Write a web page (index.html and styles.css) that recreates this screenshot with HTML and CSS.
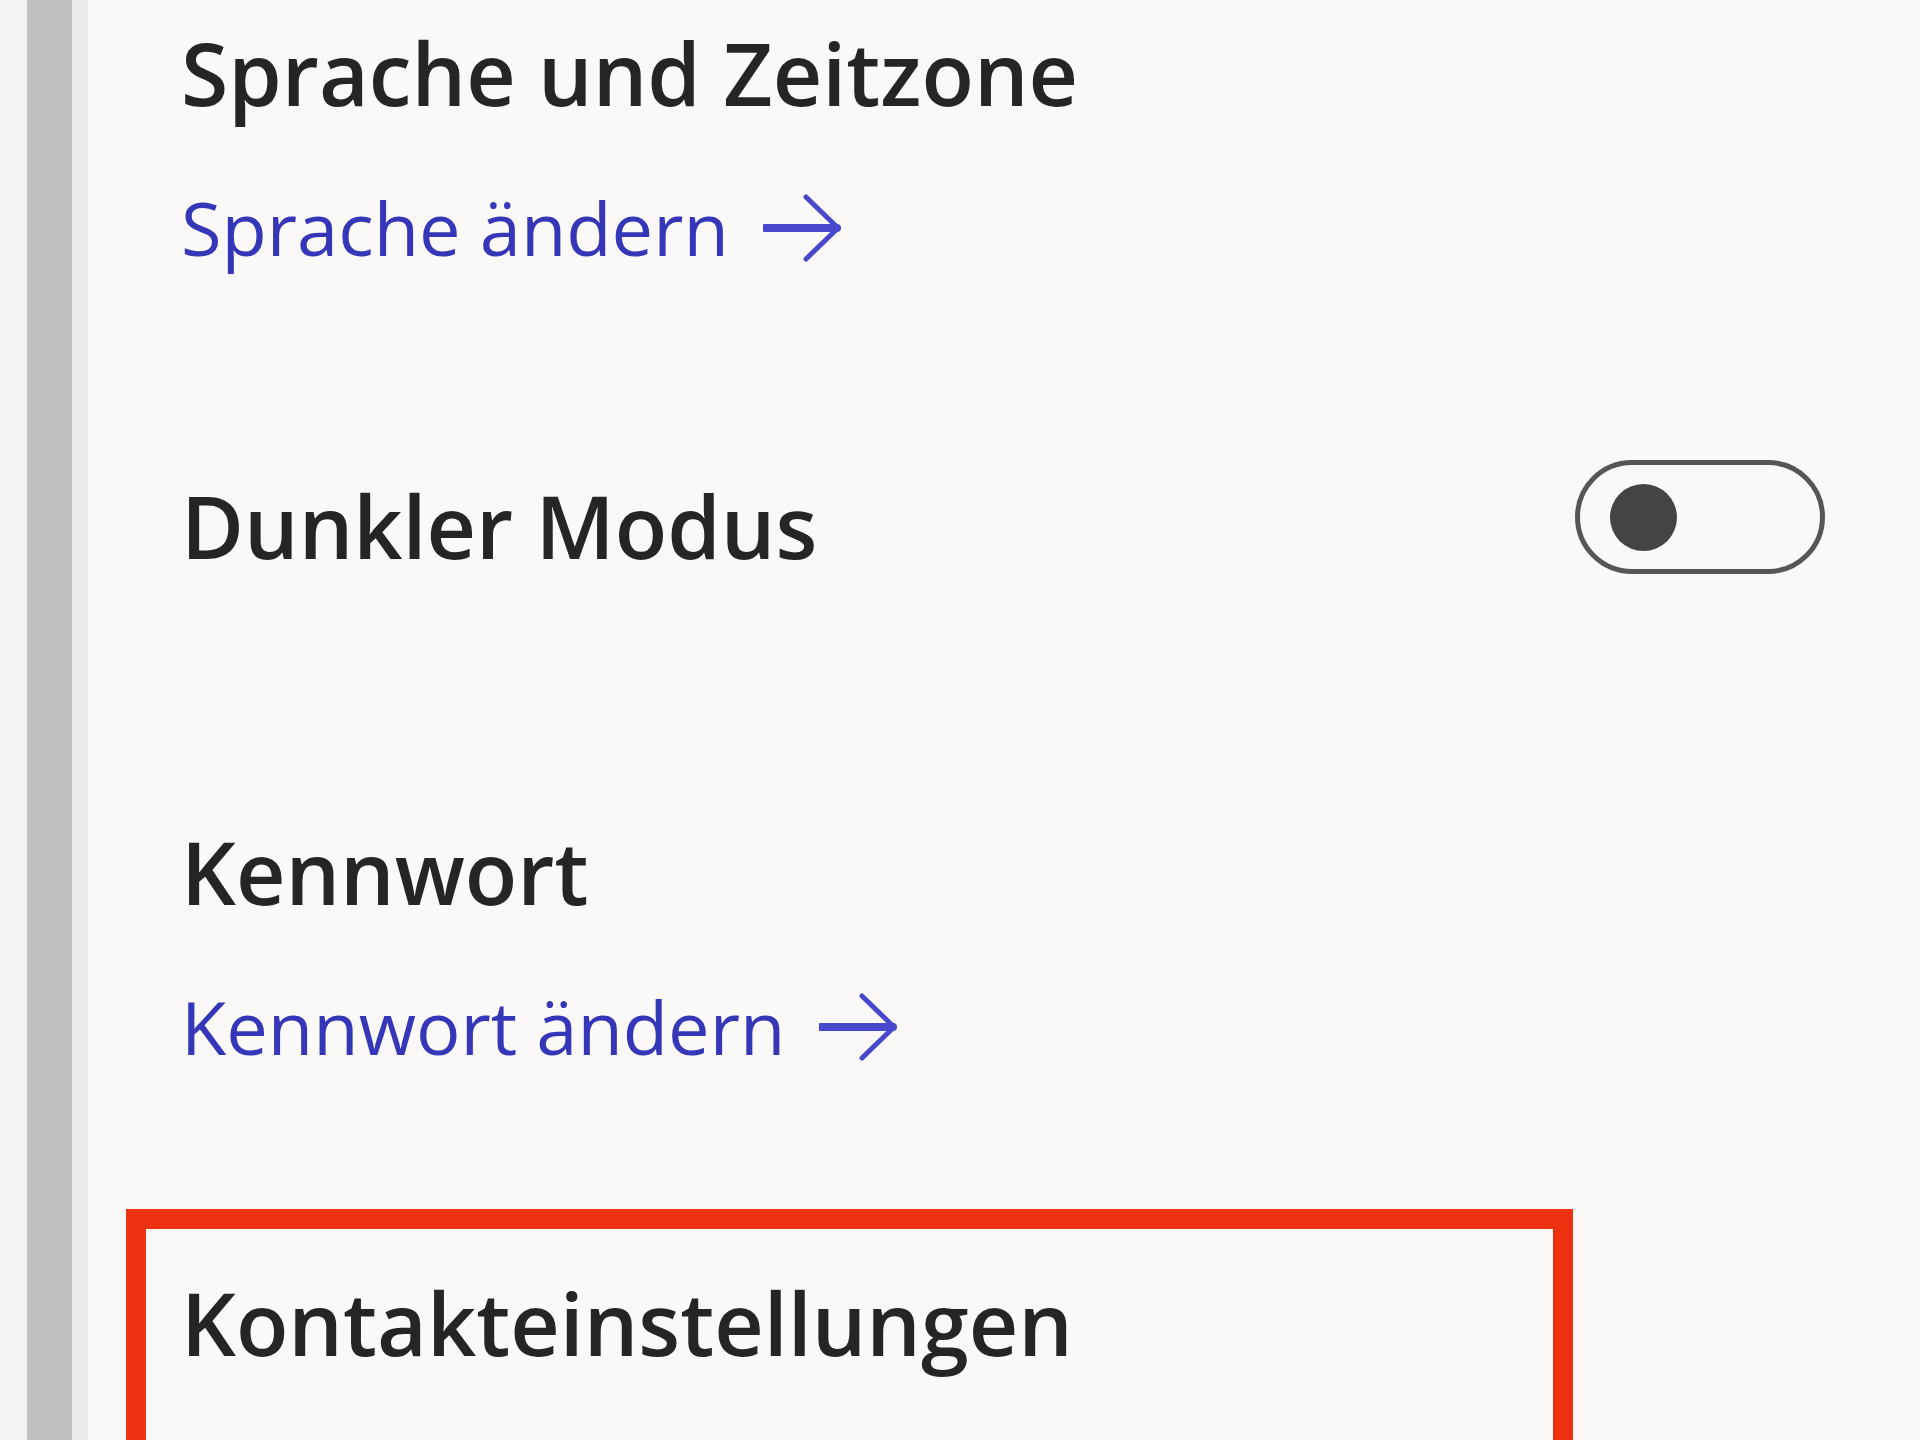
FILE: index.html
```html
<!DOCTYPE html>
<html lang="de">
<head>
  <meta charset="UTF-8" />
  <meta name="viewport" content="width=device-width, initial-scale=1.0"/>
  <title>Einstellungen</title>
  <link rel="stylesheet" href="styles.css">
</head>
<body>

  <div class="page">
    <!-- Leiste links -->
    <div class="rail">
      <div class="rail-track"></div>
      <div class="rail-thumb"></div>
      <div class="rail-edge"></div>
    </div>

    <main class="settings">
      <section class="setting">
        <h2 class="setting-title">Sprache und Zeitzone</h2>
        <a class="setting-link" href="#">
          <span>Sprache ändern</span>
          <svg class="arrow" viewBox="0 0 80 70" aria-hidden="true">
            <path class="arrow-shaft" d="M2 35 H74" />
            <path class="arrow-head" d="M43 4 L75 35 L43 66" />
          </svg>
        </a>
      </section>

      <section class="setting setting-row">
        <h2 class="setting-title">Dunkler Modus</h2>
        <button class="toggle" type="button" aria-pressed="false"><span class="toggle-knob"></span></button>
      </section>

      <section class="setting setting-password">
        <h2 class="setting-title">Kennwort</h2>
        <a class="setting-link" href="#">
          <span>Kennwort ändern</span>
          <svg class="arrow" viewBox="0 0 80 70" aria-hidden="true">
            <path class="arrow-shaft" d="M2 35 H74" />
            <path class="arrow-head" d="M43 4 L75 35 L43 66" />
          </svg>
        </a>
      </section>

      <!-- markierter Bereich -->
      <section class="setting setting-marked">
        <h2 class="setting-title">Kontakteinstellungen</h2>
      </section>
    </main>
  </div>

</body>
</html>
```

FILE: styles.css
```css
* {
  margin: 0;
  padding: 0;
  box-sizing: border-box;
}

html, body {
  height: 100%;
}

body {
  background-color: #faf9f8;
  color: #252525;
  font-family: 'Open Sans', 'Noto Sans', sans-serif;
  overflow: hidden;
}

.page {
  display: flex;
  min-height: 100%;
}

/* Leiste links */
.rail {
  display: flex;
  flex-shrink: 0;
}

.rail-track {
  width: 27px;
  background-color: #f4f4f4;
}

.rail-thumb {
  width: 45px;
  background-color: #c1c1c1;
}

.rail-edge {
  width: 16px;
  background-color: #ebebeb;
}

.settings {
  flex: 1;
  padding: 29px 95px 0 93px;
}

.setting-title {
  font-size: 86px;
  line-height: 88px;
  font-weight: 600;
  color: #252525;
}

.setting-link {
  display: inline-flex;
  align-items: center;
  gap: 34px;
  margin-top: 74px;
  font-size: 74px;
  line-height: 74px;
  color: #3636b8;
  text-decoration: none;
}

.arrow {
  width: 80px;
  height: 70px;
  fill: none;
  stroke: #4848cc;
  stroke-linecap: round;
  stroke-linejoin: round;
}

.arrow-shaft {
  stroke-width: 8;
}

.arrow-head {
  stroke-width: 5;
}

.setting-row {
  display: flex;
  justify-content: space-between;
  align-items: center;
  margin-top: 195px;
}

.toggle {
  display: flex;
  align-items: center;
  width: 250px;
  height: 114px;
  margin-bottom: 18px;
  padding-left: 30px;
  border: 5px solid #565656;
  border-radius: 57px;
  background: transparent;
  cursor: pointer;
}

.toggle-knob {
  width: 67px;
  height: 67px;
  border-radius: 50%;
  background-color: #444444;
}

.setting-password {
  margin-top: 236px;
}

.setting-marked {
  margin: 145px 252px 0 -55px;
  padding: 50px 35px 300px;
  border: 20px solid #ec3211;
}
```
